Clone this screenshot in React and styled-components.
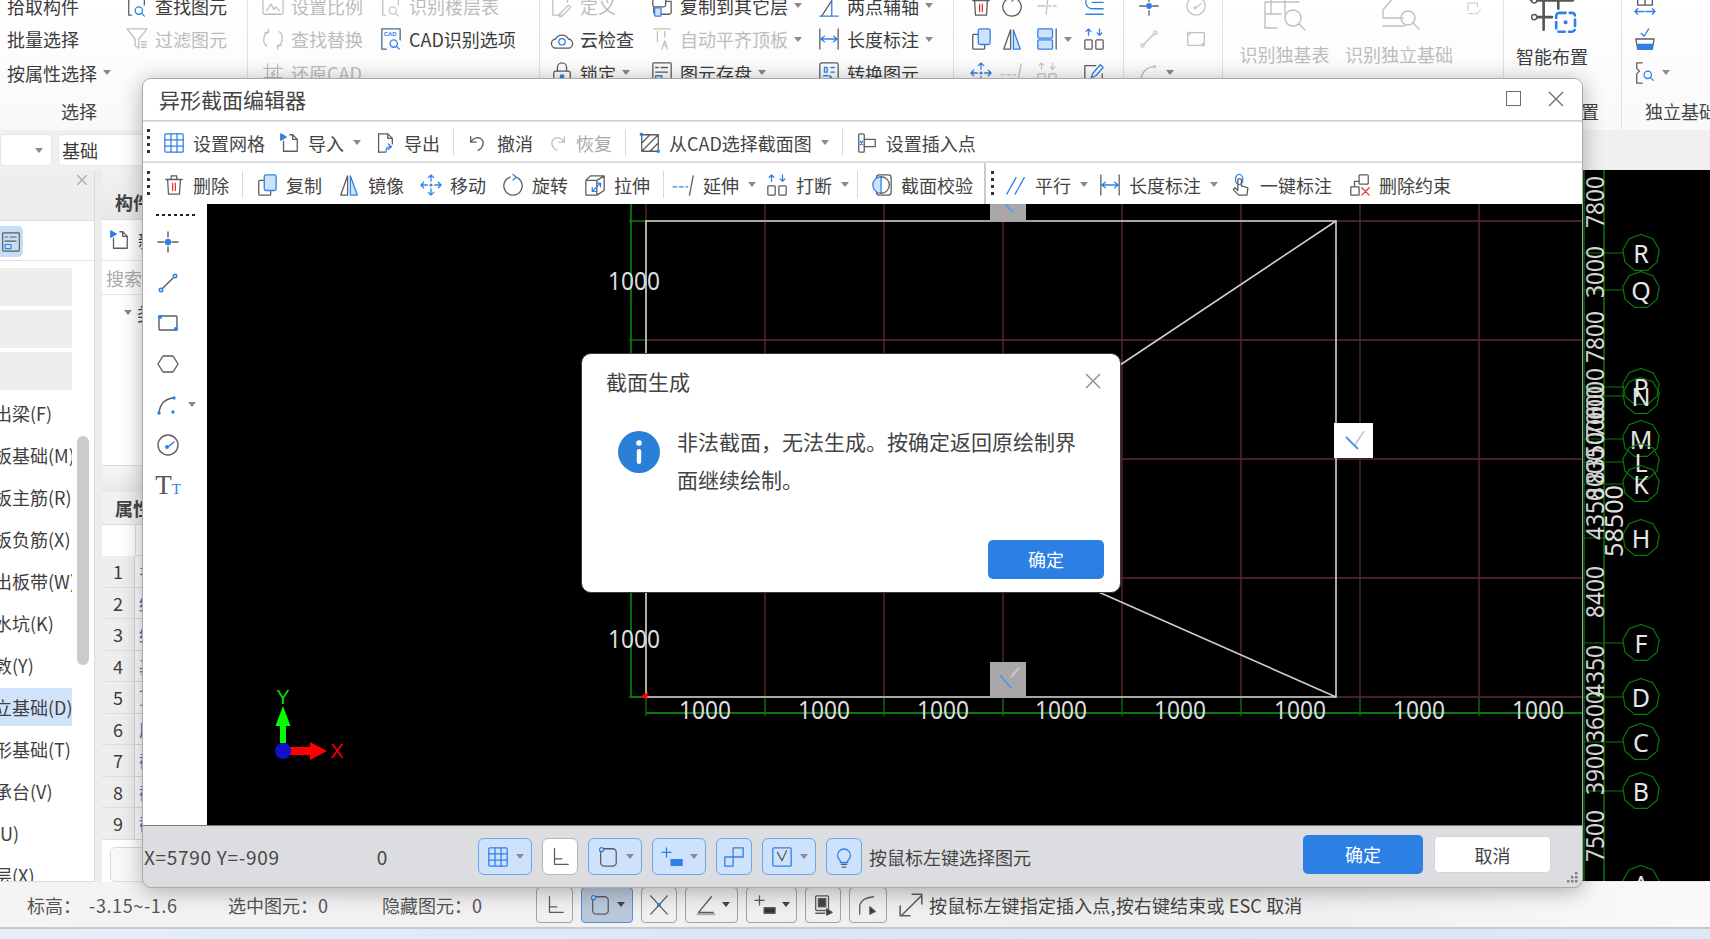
import React from 'react';
import styled, { createGlobalStyle } from 'styled-components';

const FONT = '"Noto Sans CJK SC", "Liberation Sans", sans-serif';
const INK = '#5c5c5c';
const BLUE = '#2f80e6';
const TINT = '#cfe2fb';
const RED = '#e5343a';

const GlobalStyle = createGlobalStyle`
  html, body { margin: 0; padding: 0; overflow: hidden; background: #f3f3f3; }
  * { box-sizing: border-box; }
`;

// 아이콘 모음 (24x24)
const ICONS = {
  grid: <g stroke={BLUE}><rect x="2" y="2" width="20" height="20" rx="1" /><path d="M8.7 2v20M15.3 2v20M2 8.7h20M2 15.3h20" /></g>,
  importDoc: <><path d="M6 10v11h15V8l-5-5h-3" /><path d="M16 3v5h5" /><path d="M3 2l6 3.5L3 9z" fill={BLUE} stroke={BLUE} /></>,
  exportDoc: <><path d="M5 22V2h10l5 5v6" /><path d="M15 2v5h5M5 22h7" /><path d="M13 22c0-4 2-6 5-6M15.500 13l3.500 3-3.500 3" stroke={BLUE} /></>,
  undo: <path d="M4 5v6h6M4 11c3-5 9-6 12-3 3 3 2 9-4 12" />,
  redo: <path d="M20 5v6h-6M20 11c-3-5-9-6-12-3-3 3-2 9 4 12" />,
  cadsel: <><path d="M3 3h18v18H3zM3 12l9-9M3 21 21 3M12 21l9-9" /><g fill={BLUE} stroke={BLUE}><rect x="1.500" y="1.500" width="2" height="2" /><rect x="20" y="20" width="2" height="2" /></g></>,
  insert: <><rect x="3" y="2" width="6" height="20" rx="1" /><path d="M9 8h12v8H9" /><path d="M4.500 10l3 4M7.500 10l-3 4" stroke={BLUE} /></>,
  trash: <><path d="M3 6h18M9 6V2h6v4M5 6l1 16h12l1-16" /><path d="M10.500 10v8M13.500 10v8" stroke={RED} /></>,
  copy: <><path d="M9 7H4a1 1 0 0 0-1 1v14a1 1 0 0 0 1 1h11a1 1 0 0 0 1-1v-4" /><rect x="9" y="1" width="13" height="17" rx="2" fill={TINT} stroke={BLUE} /></>,
  mirror: <><path d="M10.500 2 3 23h7.500z" /><path d="M13.500 2 21 23h-7.500z" fill={TINT} stroke={BLUE} /></>,
  move: <g stroke={BLUE}><path d="M12 1v7M12 16v7M1 12h7M16 12h7M12 1 9 4M12 1l3 3M12 23l-3-3M12 23l3-3M1 12l3-3M1 12l3 3M23 12l-3-3M23 12l-3 3" /><circle cx="12" cy="12" r="1" /></g>,
  rotate: <><path d="M15 3.500a10 10 0 1 1-6 0" /><path d="M12 .5l3.500 3-3.500 3" stroke={BLUE} /></>,
  stretch: <><path d="M2 7h12v16H2zM2 7l5-5h15v16l-8 5M14 7l8-5" /><path d="M9 19l9-9M18 14v-4h-4M9 15v4h4" stroke={BLUE} /></>,
  extend: <><path d="M0 14h4M7 14h4M14 14h2" stroke={BLUE} /><path d="M18 23 22 2" /></>,
  breakup: <><path d="M6 1v7M18 1v7M3.500 3.500 6 1l2.500 2.500M15.500 5.500 18 8l2.500-2.500" stroke={BLUE} /><rect x="2" y="13" width="8" height="10" rx="1" /><rect x="14" y="13" width="8" height="10" rx="1" /></>,
  section: <><rect x="6" y="1" width="16" height="22" rx="3" /><path d="M11 3a9 9 0 0 0 0 18z" fill={TINT} stroke={BLUE} /><path d="M11 3a9 9 0 0 1 0 18" /></>,
  parallel: <path d="M2 22 12 4M11 22l10-18" stroke={BLUE} />,
  length: <><path d="M2 1v22M22 1v22" /><path d="M3 12h18M3 12l4-3M3 12l4 3M21 12l-4-3M21 12l-4 3" stroke={BLUE} /></>,
  oneClick: <><ellipse cx="10" cy="6" rx="4" ry="5.500" stroke={BLUE} /><path d="M8.500 7v11l-3-3-2 2 6 6h9l1-8-7-2V7a1.200 1.200 0 0 0-4 0" /></>,
  delcon: <><rect x="11" y="1" width="10" height="10" rx="1" /><path d="M11 8H6v6M2 14h9v9H2z" /><path d="M14 15l8 8M22 15l-8 8" stroke={RED} /></>,
  point: <><path d="M12 2v5M12 17v5M2 12h6M16 12h6" /><circle cx="12" cy="12" r="2.500" fill={BLUE} stroke={BLUE} /></>,
  line: <><path d="M6 18 18 6" /><circle cx="5" cy="19" r="1.800" fill={TINT} stroke={BLUE} /><circle cx="19" cy="5" r="1.800" fill={TINT} stroke={BLUE} /></>,
  rect: <><rect x="3" y="5" width="18" height="14" rx="1" /><circle cx="4" cy="6" r="1.400" fill={BLUE} stroke={BLUE} /><circle cx="20" cy="18" r="1.400" fill={BLUE} stroke={BLUE} /></>,
  hex: <path d="M7 4h10l5 8-5 8H7l-5-8z" />,
  arc: <><path d="M3 20C4 11 9 6 17 5" /><g fill={BLUE} stroke={BLUE}><circle cx="3" cy="20" r="1" /><circle cx="18" cy="5" r="1" /><circle cx="17" cy="19" r="1" /></g></>,
  gauge: <><circle cx="12" cy="12" r="10" /><path d="M12 14l6-5" stroke={BLUE} /><circle cx="11" cy="14" r="1.200" fill={BLUE} stroke={BLUE} /></>,
  find: <><path d="M6 22H3V1h17v10" /><path d="M8 1v3h7V1" /><circle cx="14" cy="17" r="4" stroke={BLUE} /><path d="M17 20l3 3" stroke={BLUE} /></>,
  filter: <><path d="M1 1h22l-9 11v10l-4-3v-7z" /><path d="M17 15h5M17 18h5M17 21h5" /></>,
  scale: <><rect x="1" y="4" width="22" height="17" rx="2" /><path d="M5 17l5-7 3 6 2-3 4 4" /></>,
  replace: <><path d="M7 4a10 10 0 0 0-2 16M17 20a10 10 0 0 0 2-16" /><path d="M7 1v4H3M17 23v-4h4" /></>,
  cadq: <><path d="M7 23H2V1h20v12" stroke="#46688f" /><text x="4" y="9" fontSize="6.500" fontFamily="Liberation Sans" fill={BLUE} stroke="none" fontWeight="700">CAD</text><circle cx="15" cy="17" r="4" stroke={BLUE} /><path d="M18 20l3 3" stroke={BLUE} /></>,
  restore: <><path d="M6 2v20M17 2v20M2 7h20M2 17h20" /><path d="M14 9l-4 4h4l-4 4" /></>,
  define: <><path d="M12 22H2V1h16v7" /><path d="M9 21l10-10 2.500 2.500-10 10H9z" /></>,
  cloud: <><path d="M6 22a5 5 0 0 1-1-10 8 8 0 0 1 14 0 5 5 0 0 1-1 10z" /><circle cx="12" cy="15" r="3.500" stroke={BLUE} /></>,
  lock: <><rect x="3" y="10" width="18" height="13" rx="2" /><path d="M7 10V6a5 5 0 0 1 10 0v4" /><circle cx="12" cy="16" r="2" fill={BLUE} stroke={BLUE} /></>,
  copyLayer: <><path d="M13 7h9v12a2 2 0 0 1-2 2H5a2 2 0 0 1-2-2V11" /><rect x="2" y="1" width="14" height="12" rx="2" fill="#fff" /><rect x="4" y="14" width="7" height="9" rx="1" fill={TINT} stroke={BLUE} /></>,
  align: <><path d="M3 1h18M7 4v11M15 4v6" /><path d="M12 23l3-9 3 9M13 19h4" /></>,
  store: <><rect x="2" y="1" width="20" height="22" rx="1" /><path d="M5 6h3M11 6h7M5 11h13" /><rect x="5" y="15" width="7" height="5" stroke={BLUE} fill={TINT} /></>,
  twoPoint: <><path d="M4 23 19 0" /><path d="M2 23h20" stroke={BLUE} /><path d="M15 23V8" stroke={BLUE} /></>,
  convert: <><rect x="2" y="1" width="20" height="22" rx="2" /><path d="M7 6h3v5H7zM14 6h4M14 11h4M6 15h5M13 15v5M13 15l2 2M8 20l-2-2" stroke={BLUE} /></>,
  trim: <path d="M2 12h8M14 12h2M19 12h3M13 3l-2 18" />,
  offset: <g stroke={BLUE}><path d="M22 1H10a7 7 0 0 0 0 14h12" /><path d="M22 8H10M3 21h19" /></g>,
  alignBlock: <><rect x="2" y="1" width="16" height="10" rx="1" fill={TINT} stroke={BLUE} /><rect x="2" y="13" width="16" height="10" rx="1" fill={TINT} stroke={BLUE} /><path d="M22 1v22" /></>,
  edit: <><path d="M14 4H2v19h19V13" /><path d="M9 17l2-5 8-9 3 3-8 9z" stroke={BLUE} /></>,
  smallCheck: <><path d="M3 14V3h14v6M3 19h8" /><path d="M13 17l3 3 6-7" /></>,
  spread: <><path d="M4 3h16v8H4zM12 3v8" stroke="#555" /><path d="M1 18h10M1 18l3-3M1 18l3 3M13 18h10M23 18l-3-3M23 18l-3 3" stroke={BLUE} /></>,
  basin: <><path d="M2 12h20l-2 11H4z" /><rect x="4" y="18" width="16" height="5" fill={BLUE} stroke={BLUE} /><path d="M8 6l3 3 5-8" stroke={BLUE} /></>,
  bracket: <><path d="M9 1H3v6l3 3-3 3v10h6" /><circle cx="15" cy="14" r="4" stroke={BLUE} /><path d="M18 17l3 3" stroke={BLUE} /></>,
  ortho: <path d="M6 3v17h15M6 14h8" />,
  snap: <><rect x="4" y="3" width="17" height="19" rx="4" /><circle cx="5" cy="4" r="2.200" fill={TINT} stroke={BLUE} /></>,
  plusBar: <><path d="M6 2v10M1 7h10" stroke={BLUE} /><rect x="11" y="15" width="12" height="6" fill={BLUE} stroke={BLUE} /></>,
  plusBarDark: <><path d="M6 2v10M1 7h10" /><rect x="11" y="15" width="12" height="6" fill="#333" /></>,
  pair: <path d="M2 12h9v10H2zM11 12V2h11v10H11" stroke={BLUE} />,
  checkBox: <><rect x="2" y="2" width="20" height="20" rx="1" stroke={BLUE} /><path d="M7 7l5 9 5-11" /></>,
  bulb: <><path d="M8 16a7 7 0 1 1 8 0v2H8z" stroke={BLUE} /><path d="M9 20h6M10 23h4" /></>,
  crossLines: <><path d="M3 2l18 20M21 2 3 22" /><circle cx="12" cy="12" r="1.500" fill={BLUE} stroke={BLUE} /></>,
  angle: <><path d="M19 3 5 20h16" /><path d="M4 22h18" stroke="#aaa" strokeWidth="2.500" /></>,
  monitor: <><rect x="4" y="2" width="14" height="16" rx="1" /><rect x="7" y="5" width="8" height="9" fill="#444" /><path d="M4 21h10M16 16l6 4-6 3z" fill="#333" /></>,
  arcEnd: <><path d="M3 22V12C4 8 9 4 18 3" /><path d="M14 14l6 5-6 3z" fill="#333" /></>,
  expand: <path d="M3 22 22 3M13 2h9v9M2 13v9h9" />,
  bigTable: <><path d="M8-8v30M22-8v30M36-8v14M2 10h34M2 22h16M2 10v26h12" /><circle cx="30" cy="26" r="8" /><path d="M36 32l6 6" /></>,
  bigFooting: <><path d="M16-6v12l-10 12v8h20M6 34h22M28-6v12" /><circle cx="31" cy="26" r="7" /><path d="M36 31l6 6" /></>,
  bigSmart: <><path d="M14-6v42M28-6v22M2 8h40M4 24h18" stroke="#555" strokeWidth="2.500" /><g fill="#fff" stroke="#555"><circle cx="5" cy="8" r="2.500" /><circle cx="5" cy="24" r="2.500" /></g><rect x="26" y="20" width="18" height="18" rx="3" stroke={BLUE} strokeWidth="2.500" strokeDasharray="6 4" fill="#fff" /><circle cx="35" cy="29" r="1.300" fill={BLUE} stroke={BLUE} /></>,
};

const Icon = ({ name, size = 22, box = 24, off, className }) => (
  <IconSvg
    className={className}
    $off={off}
    width={size}
    height={size}
    viewBox={`0 0 ${box} ${box}`}
    fill="none"
    stroke={INK}
    strokeWidth="1.400"
    strokeLinecap="round"
    strokeLinejoin="round"
  >
    {ICONS[name]}
  </IconSvg>
);

const RIBBON = [
  {
    width: 338, pad: 68, offset: -90, label: '选择',
    cols: [
      { width: 148, rows: [['find', '拾取构件'], ['grid', '批量选择'], ['store', '按属性选择', true]] },
      { rows: [['find', '查找图元'], ['filter', '过滤图元', false, true]] },
    ],
  },
  {
    width: 292, pad: 14, label: '',
    cols: [
      { width: 118, rows: [['scale', '设置比例', false, true], ['replace', '查找替换', false, true], ['restore', '还原CAD', false, true]] },
      { rows: [['find', '识别楼层表', false, true], ['cadq', 'CAD识别选项']] },
    ],
  },
  {
    width: 414, pad: 11, label: '',
    cols: [
      { width: 100, rows: [['define', '定义', false, true], ['cloud', '云检查'], ['lock', '锁定', true]] },
      { width: 167, rows: [['copyLayer', '复制到其它层', true], ['align', '自动平齐顶板', true, true], ['store', '图元存盘', true]] },
      { rows: [['twoPoint', '两点辅轴', true], ['length', '长度标注', true], ['convert', '转换图元']] },
    ],
  },
  {
    width: 170, pad: 16, label: '',
    cols: [
      { width: 31, rows: [['trash'], ['copy'], ['move']] },
      { width: 35, rows: [['rotate'], ['mirror'], ['extend', null, false, true]] },
      { width: 47, rows: [['trim', null, false, true], ['alignBlock', null, true], ['breakup', null, false, true]] },
      { rows: [['offset'], ['breakup'], ['edit']] },
    ],
  },
  {
    width: 99, pad: 14, label: '',
    cols: [
      { width: 47, rows: [['point'], ['line', null, false, true], ['arc', null, true, true]] },
      { rows: [['gauge', null, false, true], ['rect', null, false, true]] },
    ],
  },
];

const TOOLS_TOP = [
  { icon: 'grid', label: '设置网格' },
  { icon: 'importDoc', label: '导入', caret: true },
  { icon: 'exportDoc', label: '导出' },
  'sep',
  { icon: 'undo', label: '撤消' },
  { icon: 'redo', label: '恢复', off: true },
  'sep',
  { icon: 'cadsel', label: '从CAD选择截面图', caret: true },
  'sep',
  { icon: 'insert', label: '设置插入点' },
];

const TOOLS_EDIT = [
  { icon: 'trash', label: '删除' },
  'sep',
  { icon: 'copy', label: '复制' },
  { icon: 'mirror', label: '镜像', nudge: 3 },
  { icon: 'move', label: '移动', nudge: 3 },
  { icon: 'rotate', label: '旋转', nudge: 3 },
  { icon: 'stretch', label: '拉伸', nudge: 3 },
  'sep',
  { icon: 'extend', label: '延伸', caret: true, nudge: -4 },
  { icon: 'breakup', label: '打断', caret: true, nudge: -3 },
  { sep: true, nudge: -5 },
  { icon: 'section', label: '截面校验' },
];

const TOOLS_DIM = [
  { icon: 'parallel', label: '平行', caret: true, nudge: -2 },
  { icon: 'length', label: '长度标注', caret: true, nudge: -2 },
  { icon: 'oneClick', label: '一键标注', nudge: -1 },
  { icon: 'delcon', label: '删除约束', nudge: 4 },
];

const SIDE_ROWS = ['出梁(F)', '板基础(M)', '板主筋(R)', '板负筋(X)', '出板带(W)', '水坑(K)', '敦(Y)', '立基础(D)', '形基础(T)', '承台(V)', '(U)', '层(X)'];
const PROP_ROWS = ['名称', '结构类别', '结构类型', '基础类型', '顶标高', '底标高', '截面形状', '截面宽度', '截面高度'];
const STRIP_ICONS = ['point', 'line', 'rect', 'hex', 'arc', 'gauge'];

const BOTTOM_TOGGLES = [
  { icon: 'grid', caret: true },
  { icon: 'ortho', plain: true },
  { icon: 'snap', caret: true },
  { icon: 'plusBar', caret: true },
  { icon: 'pair' },
  { icon: 'checkBox', caret: true },
  { icon: 'bulb' },
];

const STATUS_BUTTONS = [
  { icon: 'ortho', width: 37 },
  { icon: 'snap', width: 52, caret: true, active: true },
  { icon: 'crossLines', width: 36 },
  { icon: 'angle', width: 53, caret: true },
  { icon: 'plusBarDark', width: 51, caret: true },
  { icon: 'monitor', width: 36 },
  { icon: 'arcEnd', width: 38 },
];

// CAD 도면 좌표 (페이지 기준)
const GRID_X = [646, 765, 884, 1003, 1122, 1241, 1360, 1479];
const GRID_Y = [221, 340, 459, 578, 697];
const DIM_BOTTOM = [705, 824, 943, 1061, 1180, 1300, 1419, 1538];

const AXIS_MARKS = [
  ['S', 150], ['R', 253], ['Q', 290], ['P', 387], ['N', 396], ['M', 439], ['L', 462], ['K', 484],
  ['H', 538], ['F', 643], ['D', 697], ['C', 742], ['B', 791], ['A', 884],
];

const AXIS_DIMS = [
  ['7800', 1594, 202], ['3000', 1594, 272], ['7800', 1594, 337], ['6000', 1594, 394], ['7000', 1594, 412],
  ['5000', 1594, 432], ['8350', 1594, 458], ['8000', 1594, 474], ['4350', 1594, 514], ['58500', 1613, 521],
  ['8400', 1594, 592], ['4350', 1594, 671], ['3600', 1594, 717], ['3900', 1594, 769], ['7500', 1594, 836],
];

const octagon = (cx, cy, r) =>
  Array.from({ length: 9 }, (_, i) => {
    const a = (Math.PI * 2 * i) / 9 - Math.PI / 2;
    return `${(cx + r * Math.cos(a)).toFixed(1)},${(cy + r * Math.sin(a)).toFixed(1)}`;
  }).join(' ');

function Dim({ x, y, text, vertical, length = 52 }) {
  return (
    <DimText
      x={x}
      y={y}
      textAnchor="middle"
      dominantBaseline="central"
      textLength={length}
      lengthAdjust="spacingAndGlyphs"
      transform={vertical ? `rotate(-90 ${x} ${y})` : undefined}
    >
      {text}
    </DimText>
  );
}

function RibbonTool({ icon, label, caret, off }) {
  return (
    <RibbonItem $off={off}>
      <Icon name={icon} off={off} />
      {label && <span>{label}</span>}
      {caret && <Caret />}
    </RibbonItem>
  );
}

function Ribbon() {
  return (
    <RibbonBar>
      {RIBBON.map((group, i) => (
        <RibbonGroup key={i} $width={group.width} $offset={group.offset}>
          <GroupBody $pad={group.pad}>
            {group.cols.map((col, j) => (
              <RibbonCol key={j} $width={col.width}>
                {col.rows.map(([icon, label, caret, off], k) => (
                  <RibbonTool key={k} icon={icon} label={label} caret={caret} off={off} />
                ))}
              </RibbonCol>
            ))}
          </GroupBody>
          <GroupLabel>{group.label}</GroupLabel>
        </RibbonGroup>
      ))}
      <RibbonGroup $width={281}>
        <GroupBody $pad={16}>
          <BigTool $off $width={91}>
            <Icon name="bigTable" box={44} size={44} off />
            <span>识别独基表</span>
          </BigTool>
          <BigTool $off $width={108} $gap={15}>
            <Icon name="bigFooting" box={44} size={44} off />
            <span>识别独立基础</span>
          </BigTool>
          <TinyIcon name="smallCheck" size={16} off />
        </GroupBody>
        <GroupLabel />
      </RibbonGroup>
      <RibbonGroup $width={118}>
        <GroupBody $pad={11}>
          <BigTool $width={74}>
            <Icon name="bigSmart" box={44} size={46} />
            <span>智能布置</span>
          </BigTool>
        </GroupBody>
        <GroupLabel>智能布置</GroupLabel>
      </RibbonGroup>
      <RibbonGroup $width={118}>
        <GroupBody $pad={12}>
          <RibbonCol>
            <RibbonTool icon="spread" />
            <RibbonTool icon="basin" />
            <RibbonTool icon="bracket" caret />
          </RibbonCol>
        </GroupBody>
        <GroupLabel>独立基础</GroupLabel>
      </RibbonGroup>
    </RibbonBar>
  );
}

function LeftPanels() {
  return (
    <>
      <SidePanel>
        <PanelHeader>
          <svg width="10" height="10" viewBox="0 0 10 10" stroke="#a0a0a0" strokeWidth="1.200"><path d="M0 0l10 10M10 0 0 10" /></svg>
        </PanelHeader>
        <SideTab>
          <SideTabButton>
            <Icon name="store" size={20} />
          </SideTabButton>
        </SideTab>
        <SideList>
          <SideRow $blank />
          <SideRow $blank />
          <SideRow $blank />
          {SIDE_ROWS.map((row) => (
            <SideRow key={row} $active={row === '立基础(D)'}>{row}</SideRow>
          ))}
        </SideList>
        <SideScroll />
      </SidePanel>
      <PropPanel>
        <PropHeader>构件</PropHeader>
        <PropIconRow>
          <Icon name="importDoc" size={22} />
          <span>新</span>
        </PropIconRow>
        <SearchRow>搜索</SearchRow>
        <TreeRow>
          <TreeCaret />
          <span>类</span>
        </TreeRow>
        <PropBreak />
        <PropHeader $second>属性</PropHeader>
        <PropBlank />
        {PROP_ROWS.map((row, i) => (
          <PropRow key={row}>
            <PropIndex>{i + 1}</PropIndex>
            <PropName>{row}</PropName>
          </PropRow>
        ))}
        <PropButton />
      </PropPanel>
    </>
  );
}

function BackdropDrawing() {
  return (
    <BackdropSvg viewBox="1582 170 128 711" width="128" height="711">
      <path d="M1584 170V881M1604 170V881" stroke="#0a7a0a" strokeWidth="1.500" />
      {AXIS_MARKS.map(([letter, y]) => (
        <g key={letter}>
          <path d={`M1582 ${y}H1623`} stroke="#0a7a0a" strokeWidth="1.200" />
          <polygon points={octagon(1641, y, 18.5)} fill="#000" fillOpacity={letter === 'N' || letter === 'L' || letter === 'K' ? 0 : 1} stroke="#0a7a0a" strokeWidth="1.200" />
          <AxisLetter x={1641} y={y} textAnchor="middle" dominantBaseline="central">{letter}</AxisLetter>
        </g>
      ))}
      {AXIS_DIMS.map(([text, x, y], i) => (
        <Dim key={i} x={x} y={y} text={text} vertical length={text.length === 5 ? 72 : 52} />
      ))}
    </BackdropSvg>
  );
}

function SectionDrawing() {
  return (
    <CanvasSvg viewBox="207 204 1375 621" width="1375" height="621">
      <g stroke="#5c2c32" strokeWidth="1.300">
        {GRID_X.map((x) => <path key={x} d={`M${x} 204V697`} />)}
        {GRID_Y.map((y) => <path key={y} d={`M646 ${y}H1582`} />)}
      </g>
      <g stroke="#0b7a0b" strokeWidth="1.300">
        <path d="M631 204V697H646M646 713H1582" strokeWidth="1.800" />
        {GRID_Y.map((y) => <path key={y} d={`M629 ${y}H646`} />)}
        {GRID_X.map((x) => <path key={x} d={`M${x} 698V716`} />)}
      </g>
      <g stroke="#cfcfcf" strokeWidth="1.600" fill="none">
        <path d="M646 221H1336V697H646Z" />
        <path d="M1336 221 1090 385M1336 697 1060 575" />
      </g>
      <path d="M640 697l8-5-1 7z" fill="#f00" />
      <rect x="990" y="204" width="36" height="18" fill="#a8a8a8" />
      <path d="M1003 204V222" stroke="#d99" strokeWidth="1" />
      <path d="M1005 204l8 8" stroke="#5b9fef" strokeWidth="1.800" />
      <rect x="990" y="662" width="36" height="35" fill="#a8a8a8" />
      <path d="M1011 677l8-9" stroke="#c6c6c6" strokeWidth="2.500" />
      <path d="M1000 675l11 13" stroke="#4d94ee" strokeWidth="1.600" />
      <rect x="1334" y="423" width="39" height="35" fill="#fff" />
      <path d="M1355 445l9-14" stroke="#c4c4cc" strokeWidth="1.600" />
      <path d="M1346 437l12 12" stroke="#4d94ee" strokeWidth="2" />
      {DIM_BOTTOM.map((x) => <Dim key={x} x={x} y={709} text="1000" />)}
      <Dim x={634} y={280} text="1000" />
      <Dim x={634} y={638} text="1000" />
      <path d="M283 743V726" stroke="#0f0" strokeWidth="6" />
      <path d="M283 706l7.500 20h-15z" fill="#0f0" />
      <AxisMark x={283} y={697} textAnchor="middle" dominantBaseline="central" fill="#0d0">Y</AxisMark>
      <path d="M288 751H311" stroke="#f00" strokeWidth="8" />
      <path d="M327 751l-17-9v18z" fill="#f00" />
      <ellipse cx="283" cy="751" rx="8" ry="8" fill="#1111cc" />
      <AxisMark x={337} y={751} textAnchor="middle" dominantBaseline="central" fill="#e00">X</AxisMark>
    </CanvasSvg>
  );
}

function ToolRun({ items }) {
  return items.map((item, i) => {
    if (item === 'sep') return <ToolSep key={i} />;
    if (item.sep) return <ToolSep key={i} $nudge={item.nudge} />;
    return (
      <Tool key={item.label} $off={item.off} $nudge={item.nudge}>
        <Icon name={item.icon} off={item.off} />
        <span>{item.label}</span>
        {item.caret && <Caret />}
      </Tool>
    );
  });
}

function Editor() {
  return (
    <EditorWindow>
      <TitleBar>
        <span>异形截面编辑器</span>
        <WindowControls>
          <MaxBox />
          <svg width="16" height="16" viewBox="0 0 16 16" stroke="#6a6a6a" strokeWidth="1.300"><path d="M1 1l14 14M15 1 1 15" /></svg>
        </WindowControls>
      </TitleBar>
      <ToolBar>
        <Grip />
        <ToolRun items={TOOLS_TOP} />
      </ToolBar>
      <ToolBar $second>
        <Grip />
        <ToolRun items={TOOLS_EDIT} />
        <ToolDivide />
        <Grip />
        <ToolRun items={TOOLS_DIM} />
      </ToolBar>
      <WorkArea>
        <DrawStrip>
          <StripDots />
          {STRIP_ICONS.map((name) => (
            <StripItem key={name}>
              <Icon name={name} size={24} />
              {name === 'arc' && <StripCaret />}
            </StripItem>
          ))}
          <StripItem>
            <TypeLetter>T<small>T</small></TypeLetter>
          </StripItem>
        </DrawStrip>
        <SectionDrawing />
      </WorkArea>
      <BottomBar>
        <Coords>
          <CoordText>X=5790 Y=-909</CoordText>
          <CoordText>0</CoordText>
        </Coords>
        <Toggles>
          {BOTTOM_TOGGLES.map((t, i) => (
            <Toggle key={i} $caret={t.caret} $plain={t.plain}>
              <Icon name={t.icon} size={22} />
              {t.caret && <Caret />}
            </Toggle>
          ))}
        </Toggles>
        <Hint>按鼠标左键选择图元</Hint>
        <BottomActions>
          <PrimaryButton $tall>确定</PrimaryButton>
          <GhostButton>取消</GhostButton>
        </BottomActions>
        <ResizeGrip width="14" height="14" viewBox="0 0 14 14" fill="#7d8288">
          <rect x="10" y="1" width="2.500" height="2.500" />
          <rect x="6" y="5" width="2.500" height="2.500" />
          <rect x="10" y="5" width="2.500" height="2.500" />
          <rect x="2" y="9" width="2.500" height="2.500" />
          <rect x="6" y="9" width="2.500" height="2.500" />
          <rect x="10" y="9" width="2.500" height="2.500" />
        </ResizeGrip>
      </BottomBar>
    </EditorWindow>
  );
}

function MessageDialog() {
  return (
    <Dialog>
      <DialogHead>
        <DialogTitle>截面生成</DialogTitle>
        <svg width="16" height="16" viewBox="0 0 16 16" stroke="#8a8a8a" strokeWidth="1.400"><path d="M1 1l14 14M15 1 1 15" /></svg>
      </DialogHead>
      <DialogBody>
        <svg width="42" height="42" viewBox="0 0 42 42">
          <circle cx="21" cy="21" r="21" fill="#2a7fd9" />
          <circle cx="21" cy="12" r="2.800" fill="#fff" />
          <rect x="18.800" y="18" width="4.400" height="15" rx="2.200" fill="#fff" />
        </svg>
        <DialogText>非法截面，无法生成。按确定返回原绘制界面继续绘制。</DialogText>
      </DialogBody>
      <DialogFoot>
        <PrimaryButton>确定</PrimaryButton>
      </DialogFoot>
    </Dialog>
  );
}

function App() {
  return (
    <Page>
      <GlobalStyle />
      <Ribbon />
      <ComboBar>
        <Combo $width={52}><Caret /></Combo>
        <Combo $width={200}>基础</Combo>
      </ComboBar>
      <Main>
        <LeftPanels />
        <Backdrop>
          <BackdropDrawing />
        </Backdrop>
      </Main>
      <StatusBar>
        <StatusText $width={201}>标高：&nbsp;&nbsp;<StatusNum>-3.15~-1.6</StatusNum></StatusText>
        <StatusText $width={154}>选中图元：0</StatusText>
        <StatusText $width={154}>隐藏图元：0</StatusText>
        <StatusTools>
          {STATUS_BUTTONS.map((b) => (
            <StatusButton key={b.icon} $width={b.width} $active={b.active}>
              <Icon name={b.icon} size={22} />
              {b.caret && <Caret $dark />}
            </StatusButton>
          ))}
        </StatusTools>
        <ExpandIcon name="expand" size={26} />
        <StatusHint>按鼠标左键指定插入点,按右键结束或 ESC 取消</StatusHint>
      </StatusBar>
      <TaskStrip />
      <Editor />
      <MessageDialog />
    </Page>
  );
}

export default App;

const Page = styled.div`
  position: relative;
  width: 1710px;
  height: 939px;
  overflow: hidden;
  display: flex;
  flex-direction: column;
  font-family: ${FONT};
  font-size: 18px;
  color: #3c3c3c;
  background: #f2f2f2;
`;

const IconSvg = styled.svg`
  flex-shrink: 0;
  display: block;
  overflow: visible;
  ${(p) => p.$off && 'opacity: 0.38; filter: grayscale(1);'}
`;

const Caret = styled.i`
  display: block;
  flex-shrink: 0;
  width: 0;
  height: 0;
  margin-left: -1px;
  border-left: 4px solid transparent;
  border-right: 4px solid transparent;
  border-top: 5px solid ${(p) => (p.$dark ? '#444' : '#8a8a8a')};
`;

const RibbonBar = styled.div`
  display: flex;
  height: 130px;
  flex-shrink: 0;
  overflow: hidden;
  background: linear-gradient(#ffffff, #f9f9f9);
`;

const RibbonGroup = styled.div`
  flex-shrink: 0;
  width: ${(p) => p.$width}px;
  margin-left: ${(p) => p.$offset || 0}px;
  display: flex;
  flex-direction: column;
  &:not(:last-child) { box-shadow: inset -1px 0 0 #e2e2e2; }
`;

const GroupBody = styled.div`
  display: flex;
  height: 101px;
  margin-top: -11px;
  padding-left: ${(p) => p.$pad}px;
`;

const GroupLabel = styled.div`
  margin-top: 3px;
  height: 37px;
  line-height: 37px;
  text-align: center;
  white-space: nowrap;
  color: #444;
`;

const RibbonCol = styled.div`
  flex-shrink: 0;
  width: ${(p) => (p.$width ? `${p.$width}px` : 'auto')};
  display: flex;
  flex-direction: column;
`;

const RibbonItem = styled.div`
  height: 33.5px;
  display: flex;
  align-items: center;
  gap: 7px;
  white-space: nowrap;
  color: ${(p) => (p.$off ? '#bcbcbc' : '#3c3c3c')};
`;

const BigTool = styled.div`
  flex-shrink: 0;
  width: ${(p) => p.$width}px;
  margin-left: ${(p) => p.$gap || 0}px;
  display: flex;
  flex-direction: column;
  align-items: center;
  gap: 6px;
  margin-top: 1px;
  white-space: nowrap;
  color: ${(p) => (p.$off ? '#bcbcbc' : '#3c3c3c')};
  font-size: 18px;
  line-height: 24px;
  svg { margin-top: 2px; }
`;

const TinyIcon = styled(Icon)`
  margin: 12px 0 0 13px;
`;

const ComboBar = styled.div`
  height: 40px;
  flex-shrink: 0;
  display: flex;
  align-items: center;
  gap: 6px;
  background: #f0f0f0;
`;

const Combo = styled.div`
  width: ${(p) => p.$width}px;
  height: 32px;
  display: flex;
  align-items: center;
  justify-content: flex-end;
  padding-right: 8px;
  background: #fff;
  border: 1px solid #e6e6e6;
  border-radius: 4px;
  &:last-child { justify-content: flex-start; padding-left: 3px; }
`;

const Main = styled.div`
  height: 712px;
  flex-shrink: 0;
  display: flex;
  background: #ececec;
`;

const SidePanel = styled.div`
  position: relative;
  width: 95px;
  flex-shrink: 0;
  background: #fff;
  border-right: 1px solid #dcdcdc;
  border-bottom: 1px solid #dcdcdc;
  overflow: hidden;
`;

const PanelHeader = styled.div`
  height: 51px;
  background: #eeeeee;
  border-bottom: 1px solid #ddd;
  display: flex;
  justify-content: flex-end;
  align-items: flex-start;
  padding: 5px 7px 0 0;
`;

const SideTab = styled.div`
  height: 40px;
  padding-top: 5px;
  border-bottom: 1px solid #e3e3e3;
`;

const SideTabButton = styled.div`
  width: 23px;
  height: 31px;
  display: flex;
  align-items: center;
  justify-content: flex-end;
  background: #c7dcf5;
  border-radius: 0 5px 5px 0;
  svg { margin-right: 2px; }
`;

const SideList = styled.div`
  display: flex;
  flex-direction: column;
  gap: 4px;
  padding-top: 7px;
  margin-left: -6px;
`;

const SideRow = styled.div`
  width: 78px;
  height: 38px;
  flex-shrink: 0;
  line-height: 38px;
  white-space: nowrap;
  overflow: hidden;
  color: #3f3f3f;
  background: ${(p) => (p.$blank ? '#eeeeee' : p.$active ? '#cfe3fb' : 'transparent')};
`;

const SideScroll = styled.div`
  position: absolute;
  left: 77px;
  top: 266px;
  width: 12px;
  height: 229px;
  border-radius: 6px;
  background: #cbcbcb;
`;

const PropPanel = styled.div`
  width: 400px;
  margin-left: 7px;
  flex-shrink: 0;
  background: #fff;
  display: flex;
  flex-direction: column;
`;

const PropHeader = styled.div`
  height: ${(p) => (p.$second ? 33 : 51)}px;
  padding: ${(p) => (p.$second ? 0 : 16)}px 0 0 13px;
  line-height: ${(p) => (p.$second ? 33 : 32)}px;
  font-weight: 700;
  color: #444;
  background: ${(p) => (p.$second ? '#f0f0f0' : 'linear-gradient(#f2f2f2, #e8e8e8)')};
  border-bottom: 1px solid #dcdcdc;
`;

const PropIconRow = styled.div`
  height: 42px;
  padding-left: 6px;
  display: flex;
  align-items: center;
  gap: 8px;
  border-bottom: 1px solid #e6e6e6;
`;

const SearchRow = styled.div`
  height: 34px;
  line-height: 34px;
  padding-left: 4px;
  color: #aaa;
  border-bottom: 1px solid #e6e6e6;
`;

const TreeRow = styled.div`
  height: 176px;
  padding: 6px 0 0 22px;
  display: flex;
  align-items: flex-start;
  gap: 5px;
  line-height: 24px;
  border-bottom: 1px solid #dcdcdc;
`;

const TreeCaret = styled.i`
  display: block;
  margin-top: 9px;
  border-left: 4px solid transparent;
  border-right: 4px solid transparent;
  border-top: 5px solid #888;
`;

const PropBreak = styled.div`
  height: 27px;
  background: linear-gradient(#f6f6f6, #e8e8e8);
`;

const PropBlank = styled.div`
  height: 32px;
  margin-left: 33px;
  border-left: 1px solid #ddd;
  border-bottom: 1px solid #ddd;
`;

const PropRow = styled.div`
  height: 31.5px;
  display: flex;
  border-bottom: 1px solid #ddd;
`;

const PropIndex = styled.div`
  width: 33px;
  text-align: center;
  line-height: 31px;
  background: #eeeeee;
  border-right: 1px solid #d5d5d5;
`;

const PropName = styled.div`
  padding-left: 4px;
  line-height: 31px;
  color: #6a5bbf;
`;

const PropButton = styled.div`
  width: 200px;
  height: 36px;
  margin: 7px 0 0 8px;
  background: #f8f8f8;
  border: 1px solid #dadada;
  border-radius: 5px;
`;

const Backdrop = styled.div`
  flex: 1;
  height: 711px;
  background: #000;
  display: flex;
  justify-content: flex-end;
`;

const BackdropSvg = styled.svg`
  display: block;
  flex-shrink: 0;
`;

const DimText = styled.text`
  font-family: "Noto Sans", "Liberation Sans", sans-serif;
  font-size: 25px;
  fill: #dedede;
`;

const AxisLetter = styled.text`
  font-family: "Noto Sans", "Liberation Sans", sans-serif;
  font-size: 25px;
  fill: #e6e6e6;
`;

const AxisMark = styled.text`
  font-family: "Liberation Sans", sans-serif;
  font-size: 20px;
`;

const StatusBar = styled.div`
  height: 47px;
  flex-shrink: 0;
  display: flex;
  align-items: center;
  padding-left: 27px;
  background: linear-gradient(90deg, #f4f4f4, #ededed 70%, #fafafa);
  border-bottom: 2px solid #c9c9c9;
`;

const StatusText = styled.div`
  width: ${(p) => p.$width}px;
  flex-shrink: 0;
  color: #555;
  white-space: nowrap;
`;

const StatusNum = styled.span`
  letter-spacing: 0.6px;
`;

const StatusTools = styled.div`
  display: flex;
  gap: 8px;
`;

const StatusButton = styled.div`
  width: ${(p) => p.$width}px;
  height: 36px;
  display: flex;
  align-items: center;
  justify-content: center;
  gap: 7px;
  border: 1px solid ${(p) => (p.$active ? '#5a8fd0' : '#a3a3a3')};
  border-radius: 4px;
  background: ${(p) => (p.$active ? '#b9c8db' : 'transparent')};
`;

const ExpandIcon = styled(Icon)`
  margin-left: 11px;
`;

const StatusHint = styled.div`
  margin-left: 5px;
  color: #444;
  letter-spacing: 0.15px;
  white-space: nowrap;
`;

const TaskStrip = styled.div`
  flex: 1;
  background: linear-gradient(90deg, #e6eef9, #d9e6f8 50%, #dde8f7);
`;

const EditorWindow = styled.div`
  position: absolute;
  left: 142px;
  top: 78px;
  width: 1441px;
  height: 810px;
  display: flex;
  flex-direction: column;
  overflow: hidden;
  background: #dcdde0;
  border: 1px solid #a9a9a9;
  border-radius: 9px;
  box-shadow: 0 3px 22px rgba(0, 0, 0, 0.3);
`;

const TitleBar = styled.div`
  height: 42px;
  flex-shrink: 0;
  display: flex;
  align-items: center;
  justify-content: space-between;
  padding: 0 18px 2px 16px;
  background: #fff;
  font-size: 21px;
  color: #444;
  border-bottom: 1px solid #cfd1d4;
`;

const WindowControls = styled.div`
  display: flex;
  align-items: center;
  gap: 27px;
`;

const MaxBox = styled.div`
  width: 15px;
  height: 15px;
  border: 1.500px solid #6a6a6a;
`;

const ToolBar = styled.div`
  height: ${(p) => (p.$second ? 41 : 39)}px;
  margin-top: ${(p) => (p.$second ? 2 : 1)}px;
  flex-shrink: 0;
  display: flex;
  align-items: center;
  gap: 13px;
  padding: 2px 0 0 4px;
  background: #fff;
  white-space: nowrap;
`;

const Grip = styled.div`
  width: 3px;
  height: 27px;
  margin-right: 0;
  background: repeating-linear-gradient(#333 0 3px, transparent 3px 7px);
`;

const Tool = styled.div`
  display: flex;
  align-items: center;
  gap: 8px;
  margin-left: ${(p) => p.$nudge || 0}px;
  color: ${(p) => (p.$off ? '#a9a9a9' : '#444')};
  i { margin-left: 1px; }
`;

const ToolSep = styled.div`
  width: 1px;
  height: 27px;
  margin-left: ${(p) => p.$nudge || 0}px;
  background: #d8d8d8;
`;

const ToolDivide = styled.div`
  width: 2px;
  height: 41px;
  margin: -2px -8px 0 -2px;
  background: #c9cbce;
`;

const WorkArea = styled.div`
  flex: 1;
  min-height: 0;
  display: flex;
`;

const DrawStrip = styled.div`
  width: 64px;
  flex-shrink: 0;
  display: flex;
  flex-direction: column;
  align-items: flex-start;
  padding: 10px 0 0 13px;
  background: #fff;
`;

const StripDots = styled.div`
  width: 40px;
  height: 2px;
  margin-bottom: 6px;
  background: repeating-linear-gradient(90deg, #222 0 3px, transparent 3px 6px);
`;

const StripItem = styled.div`
  position: relative;
  width: 24px;
  height: 40.6px;
  display: flex;
  align-items: center;
  justify-content: center;
`;

const StripCaret = styled(Caret)`
  position: absolute;
  left: 33px;
  top: 18px;
`;

const TypeLetter = styled.span`
  font-family: "Liberation Serif", serif;
  font-size: 27px;
  line-height: 1;
  color: #555;
  small { font-size: 15px; color: ${BLUE}; }
`;

const CanvasSvg = styled.svg`
  flex-shrink: 0;
  display: block;
  background: #000;
`;

const BottomBar = styled.div`
  position: relative;
  height: 62px;
  flex-shrink: 0;
  display: flex;
  align-items: center;
  padding: 0 31px 0 1px;
  border-top: 1px solid #777;
`;

const Coords = styled.div`
  width: 334px;
  flex-shrink: 0;
  display: flex;
  gap: 97px;
`;

const CoordText = styled.span`
  color: #484848;
  font-size: 19px;
  letter-spacing: 0.7px;
  white-space: nowrap;
`;

const Toggles = styled.div`
  display: flex;
  gap: 10px;
`;

const Toggle = styled.div`
  width: ${(p) => (p.$caret ? 54 : 36)}px;
  height: 37px;
  display: flex;
  align-items: center;
  justify-content: center;
  gap: 8px;
  border-radius: 6px;
  border: 1.500px solid ${(p) => (p.$plain ? '#b5b5b5' : '#6aa6ec')};
  background: ${(p) => (p.$plain ? '#fff' : TINT)};
`;

const Hint = styled.span`
  margin-left: 7px;
  color: #444;
  white-space: nowrap;
`;

const BottomActions = styled.div`
  margin: -4px 0 0 auto;
  display: flex;
  align-items: center;
  gap: 11px;
`;

const PrimaryButton = styled.div`
  width: ${(p) => (p.$tall ? 120 : 116)}px;
  height: 39px;
  line-height: 38px;
  text-align: center;
  color: #fff;
  background: #2c80e3;
  border-radius: 5px;
`;

const GhostButton = styled.div`
  width: 117px;
  height: 37px;
  line-height: 36px;
  text-align: center;
  color: #444;
  background: #fff;
  border: 1px solid #d4d4d4;
  border-radius: 5px;
`;

const ResizeGrip = styled.svg`
  position: absolute;
  right: 3px;
  bottom: 2px;
`;

const Dialog = styled.div`
  position: absolute;
  left: 581px;
  top: 353px;
  width: 540px;
  height: 240px;
  display: flex;
  flex-direction: column;
  background: #fff;
  border: 1.500px solid #3b3b3b;
  border-radius: 10px;
  color: #444;
`;

const DialogHead = styled.div`
  display: flex;
  align-items: center;
  justify-content: space-between;
  height: 53px;
  padding: 0 19px 0 24px;
`;

const DialogTitle = styled.div`
  font-size: 21px;
`;

const DialogBody = styled.div`
  display: flex;
  gap: 17px;
  padding: 24px 40px 0 36px;
  svg { flex-shrink: 0; }
`;

const DialogText = styled.div`
  margin-top: -9px;
  font-size: 21px;
  line-height: 38px;
`;

const DialogFoot = styled.div`
  margin-top: auto;
  display: flex;
  justify-content: flex-end;
  padding: 0 16px 13px 0;
`;
